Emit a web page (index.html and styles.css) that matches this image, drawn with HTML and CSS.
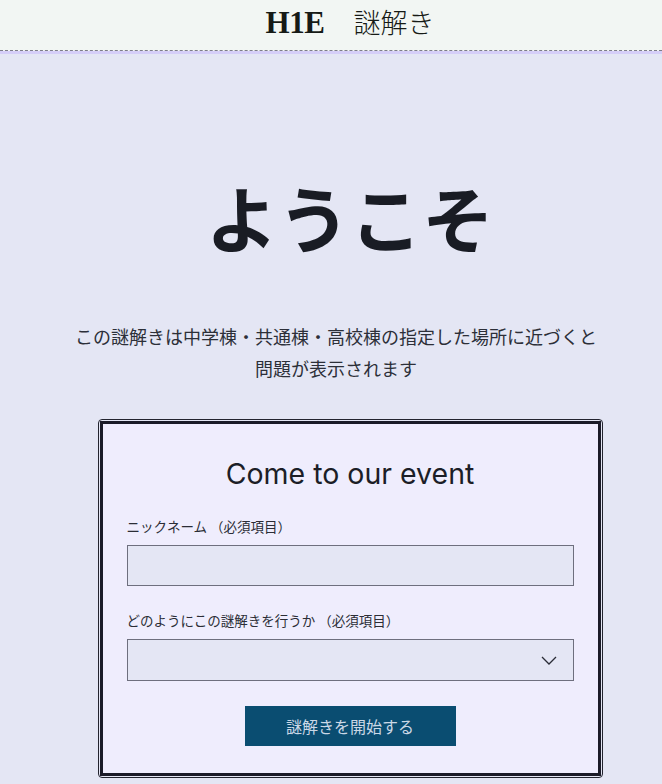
FILE: index.html
```html
<!DOCTYPE html>
<html lang="ja">
<head>
<meta charset="utf-8">
<title>H1E 謎解き</title>
<link rel="stylesheet" href="styles.css">
</head>
<body>
<header class="site-header">
  <div class="brand"><span class="brand-latin">H1E</span><span class="brand-jp">謎解き</span></div>
</header>
<main class="main">
  <h1 class="welcome">ようこそ</h1>
  <p class="intro">この謎解きは中学棟・共通棟・高校棟の指定した場所に近づくと<br>問題が表示されます</p>
  <div class="card-frame">
    <form class="card">
      <h2 class="card-title">Come to our event</h2>
      <label class="field-label" for="nick">ニックネーム （必須項目）</label>
      <input class="field-input" id="nick" type="text">
      <label class="field-label label-2" for="mode">どのようにこの謎解きを行うか （必須項目）</label>
      <div class="select-wrap">
        <select class="field-select" id="mode"><option></option></select>
        <svg class="chevron" width="16" height="9" viewBox="0 0 16 9"><path d="M1 1 L8 8 L15 1" fill="none" stroke="#2a2c36" stroke-width="1.3"/></svg>
      </div>
      <div class="actions"><button type="button" class="start-btn">謎解きを開始する</button></div>
    </form>
  </div>
</main>
</body>
</html>
```

FILE: styles.css
```css
html, body {
  margin: 0;
  padding: 0;
}
body {
  background: #e4e6f4;
  font-family: "Noto Sans CJK JP", "Noto Sans", sans-serif;
  color: #1c1f27;
  overflow: hidden;
}
.site-header {
  height: 51px;
  background: #f2f6f3;
  border-bottom: 1px dashed #7d7d88;
  box-sizing: border-box;
  padding-left: 38px;
  display: flex;
  align-items: center;
  justify-content: center;
}
.brand {
  display: flex;
  align-items: baseline;
  gap: 29px;
  color: #161a16;
  margin-top: -7px;
}
.brand-latin {
  font-family: "Liberation Serif", serif;
  font-weight: 700;
  font-size: 31px;
  letter-spacing: -0.5px;
}
.brand-jp {
  font-family: "Noto Sans CJK JP", serif;
  font-weight: 300;
  font-size: 27px;
}
.main {
  border-top: 3px solid #d5cef8;
  padding: 0 0 40px 38px;
}
.welcome {
  margin: 118px 0 0;
  text-align: center;
  font-size: 72px;
  line-height: 88px;
  font-weight: 700;
  color: #191c24;
}
.intro {
  margin: 60px 28px 0 0;
  text-align: center;
  font-size: 18px;
  line-height: 32px;
  color: #2c2f38;
}
.card-frame {
  width: 505px;
  box-sizing: border-box;
  margin: 35px auto 0;
  border: 1px solid #22232e;
  border-radius: 4px;
  padding: 1px;
}
.card {
  border: 3px solid #1b1b28;
  background: #efedfd;
  padding: 33px 24px 27px;
  display: flex;
  flex-direction: column;
}
.card-title {
  margin: 0 0 26px;
  text-align: center;
  font-family: "Inter", "Noto Sans", sans-serif;
  font-weight: 400;
  font-size: 28.5px;
  line-height: 34px;
  color: #1c1e27;
}
.field-label {
  font-size: 13.5px;
  line-height: 18px;
  color: #2b2d36;
  margin-bottom: 10px;
}
.label-2 {
  margin-top: 25px;
}
.field-input,
.field-select {
  display: block;
  width: 100%;
  box-sizing: border-box;
  height: 41px;
  background: #e4e6f4;
  border: 1px solid #6e6f7e;
  border-radius: 0;
  margin: 0;
  font: inherit;
}
.select-wrap {
  position: relative;
}
.field-select {
  height: 42px;
  appearance: none;
  -webkit-appearance: none;
}
.chevron {
  position: absolute;
  right: 17px;
  top: 17px;
  pointer-events: none;
}
.actions {
  display: flex;
  justify-content: center;
  margin-top: 25px;
}
.start-btn {
  width: 211px;
  height: 40px;
  background: #0a4d71;
  color: #cbd8e6;
  border: none;
  border-radius: 0;
  font-family: "Noto Sans CJK JP", sans-serif;
  font-size: 16px;
  padding: 0;
}
```
